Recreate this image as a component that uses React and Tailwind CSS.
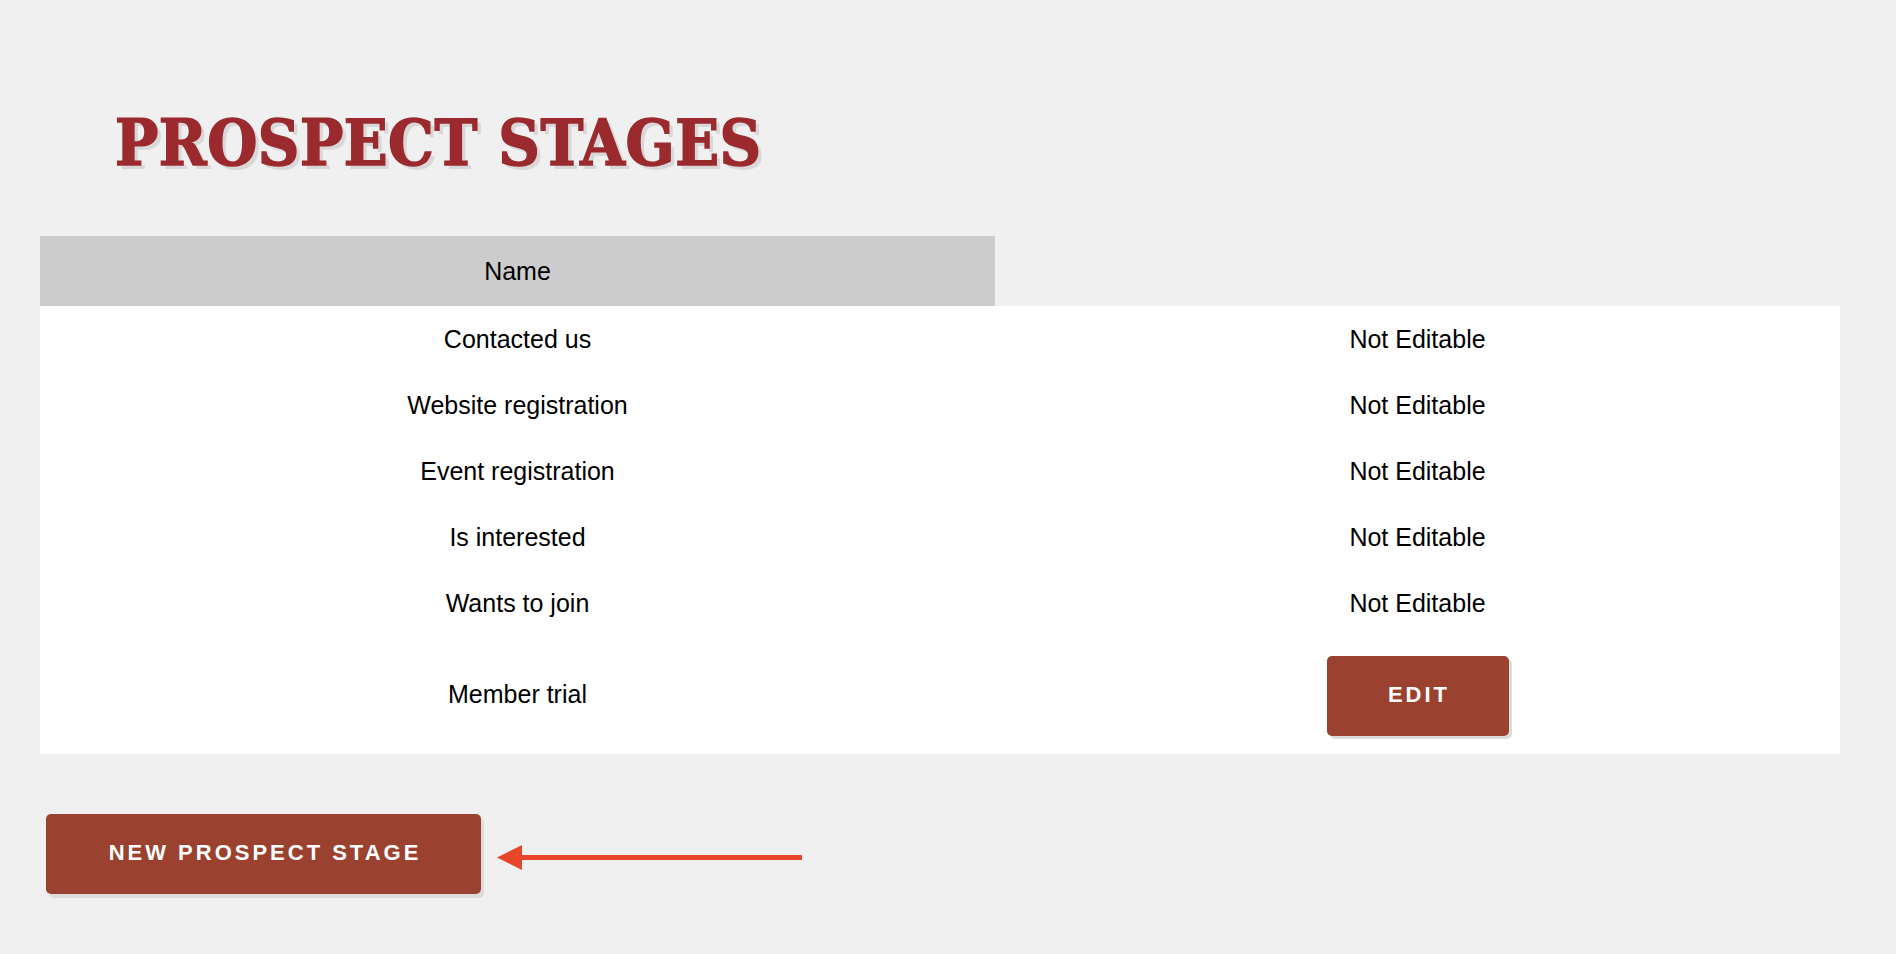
const STAGES = [
  { name: 'Contacted us', editable: false },
  { name: 'Website registration', editable: false },
  { name: 'Event registration', editable: false },
  { name: 'Is interested', editable: false },
  { name: 'Wants to join', editable: false },
  { name: 'Member trial', editable: true },
];

const Arrow = () => (
  <svg width="306" height="26" viewBox="0 0 306 26" className="mt-[31px] ml-[16px] shrink-0">
    <line x1="22" y1="12.5" x2="305" y2="12.5" stroke="#e8462b" strokeWidth="5" />
    <polygon points="0,12.5 25,0 25,25" fill="#e8462b" />
  </svg>
);

const App = () => {
  return (
    <div className="min-h-[954px] bg-[#f0f0f0] pt-[111px] px-[40px] pb-[60px] font-['Liberation_Sans',Arial,sans-serif] text-black">
      <h1 className="ml-[75px] text-[64px] leading-none font-bold tracking-[0.5px] text-[#9b2a2f] font-['DejaVu_Serif_Condensed','DejaVu_Serif',serif] [font-stretch:condensed] [-webkit-text-stroke:1.5px_#9b2a2f] [text-shadow:4px_4px_0_#d8d8d8]">
        PROSPECT STAGES
      </h1>

      <table className="mt-[61px] w-[1800px] border-collapse text-[25px]">
        <thead>
          <tr>
            <th className="w-[955px] h-[70px] pt-[1px] bg-[#cccccc] font-normal text-center">Name</th>
            <th className="h-[70px]" />
          </tr>
        </thead>
        <tbody className="bg-white">
          {STAGES.map((stage) =>
            stage.editable ? (
              <tr key={stage.name} className="h-[118px]">
                <td className="text-center">{stage.name}</td>
                <td className="text-center pt-[2px]">
                  <button className="w-[182px] h-[80px] rounded-[5px] bg-[#9b4130] text-white font-bold text-[22px] tracking-[3px] pl-[3px] pb-[3px] shadow-[3px_3px_0_#dcdcdc]">
                    EDIT
                  </button>
                </td>
              </tr>
            ) : (
              <tr key={stage.name} className="h-[66px]">
                <td className="text-center pt-[1px]">{stage.name}</td>
                <td className="text-center pt-[1px]">Not Editable</td>
              </tr>
            )
          )}
        </tbody>
      </table>

      <div className="mt-[60px] ml-[6px] flex items-start">
        <button className="w-[435px] h-[80px] rounded-[5px] bg-[#9b4130] text-white font-bold text-[22px] tracking-[3px] pl-[3px] pb-[3px] shadow-[3px_4px_0_#dcdcdc]">
          NEW PROSPECT STAGE
        </button>
        <Arrow />
      </div>
    </div>
  );
};

export default App;
